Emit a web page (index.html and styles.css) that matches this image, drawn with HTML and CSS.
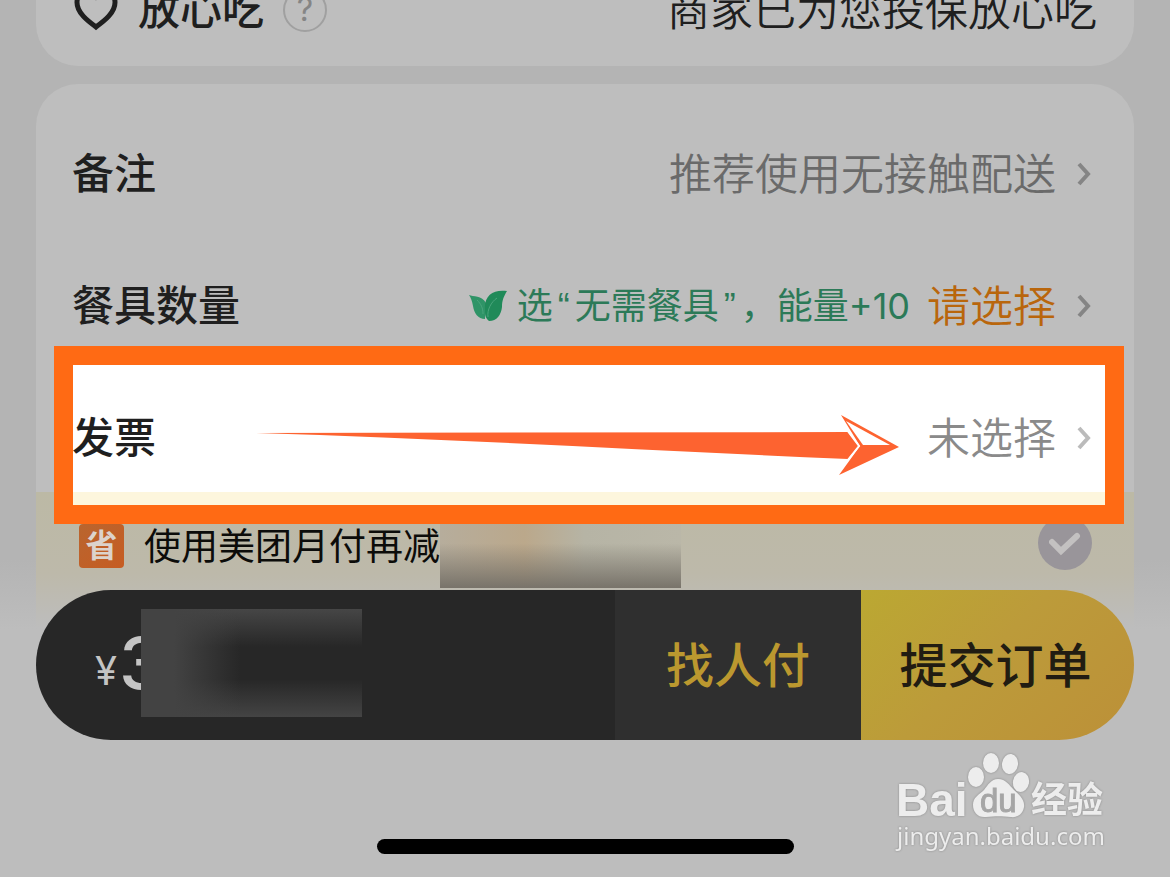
FILE: index.html
```
<!DOCTYPE html>
<html lang="zh-CN">

<head>
    <meta charset="UTF-8">
    <meta name="viewport" content="width=device-width, initial-scale=1.0">
    <title>提交订单</title>
    <link rel="stylesheet" href="styles.css">
</head>

<body>
    <main class="order">
        <section class="card safe-card">
            <div class="safe-title">
                <svg class="heart-icon" viewBox="0 0 46 44" aria-hidden="true">
                    <path d="M23 39C15 33 4 25 4 14.500 4 7 9 3 14 3c4 0 7 2 9 5 2-3 5-5 9-5 5 0 10 4 10 11.500C42 25 31 33 23 39Z" />
                </svg>
                <h2 class="label">放心吃</h2>
                <button class="help-button" type="button">?</button>
            </div>
            <p class="value safe-text">商家已为您投保放心吃</p>
        </section>

        <section class="card options-card">
            <div class="row">
                <h2 class="label">备注</h2>
                <a class="value link" href="#remark">推荐使用无接触配送
                    <svg class="chevron" viewBox="0 0 16 26" aria-hidden="true"><path d="M3 3l9 10-9 10" /></svg>
                </a>
            </div>
            <div class="row">
                <h2 class="label">餐具数量</h2>
                <a class="value link choose" href="#tableware">
                    <svg class="leaf-icon" viewBox="0 0 38 32" aria-hidden="true">
                        <path class="leaf-back" d="M0 5C4 7 13 5 17 13c2 4-1 11-1 16C9 29 5 23 4 16 3 11 2 8 0 5Z" />
                        <path class="leaf-front" d="M38 1C25-1 15 5 16 19c0 5 0 9 4 12 8 0 12-6 13-14 0-7 2-11 5-16Z" />
                        <path class="leaf-vein" d="M19 27C18 20 22 12 28 8M14 24C14 18 12 14 8 10" />
                    </svg>
                    <span class="hint">选<span class="quote">“</span>无需餐具<span class="quote">”</span>，能量+10</span>
                    请选择
                    <svg class="chevron" viewBox="0 0 16 26" aria-hidden="true"><path d="M3 3l9 10-9 10" /></svg>
                </a>
            </div>
            <div class="row invoice-row">
                <h2 class="label">发票</h2>
                <svg class="arrow" viewBox="0 0 644 60" aria-hidden="true">
                    <path class="arrow-fill" d="M0 18L592 17 603 31 592 44C400 36 200 24 0 18Z" />
                    <path class="arrow-fill" d="M585 0L643 32 583 60 604 31Z" />
                    <path class="arrow-gap" d="M590 6L634 30 607 30Z" />
                    <path class="arrow-line" d="M591 15L603 31 591 46" />
                </svg>
                <a class="value link muted" href="#invoice">未选择
                    <svg class="chevron" viewBox="0 0 16 26" aria-hidden="true"><path d="M3 3l9 10-9 10" /></svg>
                </a>
            </div>
            <label class="promo" for="monthly-pay">
                <span class="save-icon">省</span>
                <span class="promo-text">使用美团月付再减</span>
                <span class="promo-mask"></span>
                <span class="check">
                    <input class="check-input" type="checkbox" id="monthly-pay">
                    <svg class="check-mark" viewBox="0 0 32 24" aria-hidden="true"><path d="M3 10l9 9L28 4" /></svg>
                </span>
            </label>
        </section>
    </main>

    <footer class="pay-bar">
        <div class="price">
            <span class="currency">¥</span><span class="amount">3</span>
            <span class="price-mask"></span>
        </div>
        <button class="friend-button" type="button">找人付</button>
        <button class="submit-button" type="button">提交订单</button>
    </footer>

    <div class="home-indicator"></div>

    <div class="watermark">
        <svg class="watermark-logo" viewBox="0 0 208 70" role="img" aria-label="Baidu 经验">
            <text class="logo-latin" x="-1" y="65">Bai</text>
            <ellipse cx="79" cy="26" rx="8" ry="10" />
            <ellipse cx="94" cy="12" rx="8" ry="10" />
            <ellipse cx="113" cy="13" rx="8" ry="10" transform="rotate(8 113 13)" />
            <ellipse cx="124" cy="31" rx="8" ry="10" transform="rotate(10 124 31)" />
            <path d="M101 28c8 0 11 6 16 11 5 5 11 9 10 17-1 7-7 11-13 10-9-1-16-1-25 0-8 1-13-5-13-12 0-8 6-10 11-15 4-5 7-11 14-11Z" />
            <text class="logo-du" x="83" y="61">du</text>
            <text class="logo-cn" x="134" y="62">经验</text>
        </svg>
        <span class="watermark-url">jingyan.baidu.com</span>
    </div>
</body>

</html>
```
FILE: styles.css
```
* {
    box-sizing: border-box;
}

body {
    font-family: Inter, "Noto Sans CJK SC", sans-serif;
    background: linear-gradient(#b4b4b4 0, #b4b4b4 560px, #bdbdbd 630px);
    color: #1f1f1f;
    margin: 0;
    padding: 0 36px;
    min-height: 100vh;
    display: flex;
    flex-direction: column;
    position: relative;
    overflow: hidden;
}

h2,
p {
    margin: 0;
}

button {
    font-family: inherit;
    border: none;
    padding: 0;
    cursor: pointer;
}

.card {
    background-color: #bebebe;
    border-radius: 42px;
}

.label {
    font-size: 42px;
    font-weight: 500;
    line-height: 60px;
}

.value {
    font-size: 43px;
    font-weight: 350;
    line-height: 60px;
}

.safe-card {
    display: flex;
    justify-content: space-between;
    align-items: center;
    height: 112px;
    margin-top: -46px;
    padding: 0 37px;
}

.safe-title {
    display: flex;
    align-items: center;
}

.heart-icon {
    width: 46px;
    height: 44px;
    margin-right: 19px;
    fill: none;
    stroke: #1f1f1f;
    stroke-width: 5;
}

.help-button {
    width: 44px;
    height: 44px;
    margin-left: 19px;
    border: 2px solid #a0a0a0;
    border-radius: 50%;
    background: none;
    color: #858585;
    font-size: 32px;
    line-height: 40px;
}

.options-card {
    margin-top: 18px;
    padding-top: 24px;
}

.row {
    display: flex;
    justify-content: space-between;
    align-items: center;
    height: 132px;
    padding: 0 37px 0 36px;
}

.link {
    display: flex;
    align-items: center;
    color: #6a6a6a;
    text-decoration: none;
}

.chevron {
    width: 16px;
    height: 26px;
    margin: 0 5px 0 20px;
    fill: none;
    stroke: #858585;
    stroke-width: 4;
}

.choose {
    color: #b9660c;
}

.hint {
    margin: 0 17px 0 10px;
    color: #2c7a58;
    font-size: 36px;
    font-weight: 400;
}

.quote {
    padding: 0 5px;
    font-family: "Liberation Sans", sans-serif;
}

.leaf-icon {
    width: 38px;
    height: 32px;
}

.leaf-back {
    fill: #2f9467;
}

.leaf-front {
    fill: #208a59;
}

.leaf-vein {
    fill: none;
    stroke: #4aa57c;
    stroke-width: 1;
}

/* highlighted row */
.invoice-row {
    position: relative;
    z-index: 1;
}

.invoice-row::before {
    content: "";
    position: absolute;
    z-index: -1;
    top: -26px;
    right: 10px;
    bottom: -20px;
    left: 18px;
    border: 19px solid #ff6a14;
    background: linear-gradient(to top, #fdf6dd 13px, #fff 13px) padding-box;
}

.arrow {
    position: absolute;
    left: 220px;
    top: 43px;
    width: 644px;
    height: 60px;
}

.arrow-fill {
    fill: #fd6330;
}

.arrow-gap {
    fill: #fff;
}

.arrow-line {
    fill: none;
    stroke: #fff;
    stroke-width: 2;
}

.muted {
    color: #8a8a8a;
}

.muted .chevron {
    stroke: #bbb;
}

.promo {
    display: flex;
    align-items: flex-start;
    height: 136px;
    margin-top: -12px;
    padding: 32px 42px 0 43px;
    background: linear-gradient(#bcb9a5, #bdb9aa 60%, #bdbdbd);
}

.save-icon {
    width: 45px;
    height: 44px;
    border-radius: 4px;
    background: linear-gradient(135deg, #b9652f, #c65c22);
    color: #dcd3cc;
    font-size: 32px;
    font-weight: 700;
    line-height: 44px;
    text-align: center;
}

.promo-text {
    margin-left: 20px;
    color: #0c0c0a;
    font-size: 37px;
    line-height: 46px;
}

.promo-mask {
    width: 241px;
    height: 64px;
    background: linear-gradient(rgba(110, 105, 95, 0) 30%, #78736a), linear-gradient(90deg, #b6ad9c, #bba88b 35%, #b6b4a5 60%, #bab7a8);
}

.check {
    position: relative;
    width: 54px;
    height: 54px;
    margin: -8px 0 0 auto;
}

.check-input {
    appearance: none;
    display: block;
    width: 54px;
    height: 54px;
    margin: 0;
    border-radius: 50%;
    background-color: #99959a;
}

.check-mark {
    position: absolute;
    top: 16px;
    left: 11px;
    width: 32px;
    height: 24px;
    fill: none;
    stroke: #c3c1c1;
    stroke-width: 6;
    stroke-linecap: round;
    pointer-events: none;
}

.pay-bar {
    display: flex;
    height: 150px;
    margin-top: -38px;
    position: relative;
}

.price {
    flex: 1;
    display: flex;
    align-items: center;
    position: relative;
    padding: 0 0 4px 59px;
    border-radius: 75px 0 0 75px;
    background-color: #272727;
    color: #c4c4c4;
}

.currency {
    margin: 14px 2px 0 0;
    font-size: 40px;
}

.amount {
    font-size: 72px;
    font-weight: 500;
    line-height: 90px;
}

/* hides the amount */
.price-mask {
    position: absolute;
    top: 19px;
    left: 105px;
    width: 221px;
    height: 108px;
    background: linear-gradient(90deg, #434343 15%, rgba(66, 66, 66, 0) 45%), linear-gradient(#464646, #272727 35%, #272727 65%, #444);
}

.friend-button,
.submit-button {
    padding-bottom: 6px;
    font-size: 48px;
    font-weight: 500;
}

.friend-button {
    width: 246px;
    background-color: #2f2f2f;
    color: #bb982f;
}

.submit-button {
    width: 273px;
    padding-right: 4px;
    border-radius: 0 75px 75px 0;
    background: linear-gradient(135deg, #bba832, #bc9b3a 45%, #bc9038);
    color: #211c12;
}

.home-indicator {
    width: 417px;
    height: 15px;
    margin: auto auto 23px;
    border-radius: 8px;
    background-color: #000;
}

.watermark {
    position: absolute;
    right: 65px;
    bottom: 26px;
    display: flex;
    flex-direction: column;
    color: #ededed;
    filter: drop-shadow(0 0 1px #888);
}

.watermark-logo {
    width: 208px;
    height: 70px;
    fill: #ededed;
}

.logo-latin {
    font: 700 46px "Liberation Sans", sans-serif;
}

.logo-du {
    font: 400 33px "Liberation Sans", sans-serif;
    fill: #a6a6a6;
    stroke: #a6a6a6;
}

.logo-cn {
    font: 700 36px "Noto Sans CJK SC", sans-serif;
}

.watermark-url {
    font-family: "Noto Sans", sans-serif;
    font-size: 24px;
    line-height: 30px;
}
```
